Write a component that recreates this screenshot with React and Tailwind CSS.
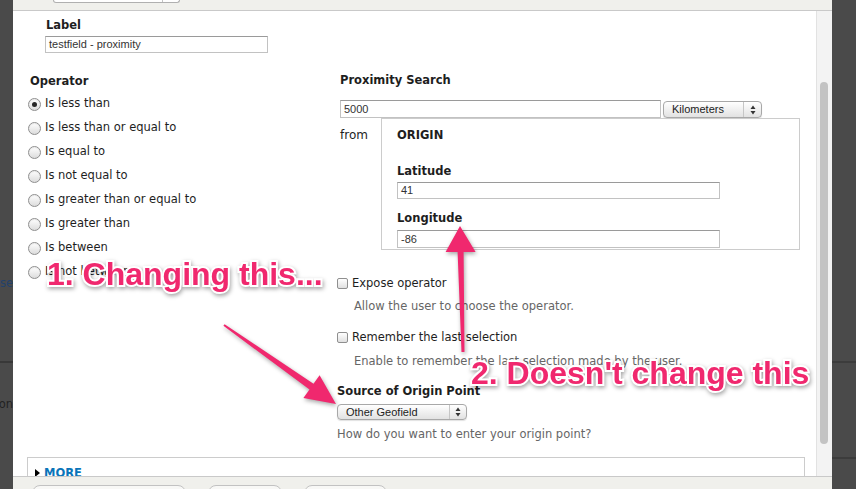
import React from "react";

function Radio({ checked }) {
  return (
    <div className="w-[13px] h-[13px] shrink-0 rounded-full border border-[#8f8f8f] bg-gradient-to-b from-[#ffffff] to-[#dcdcdc] shadow-[inset_0_1px_1px_rgba(0,0,0,0.08)] flex items-center justify-center">
      {checked ? <div className="w-[5px] h-[5px] rounded-full bg-[#262626]" /> : null}
    </div>
  );
}

function Checkbox() {
  return (
    <div className="w-[11px] h-[11px] shrink-0 rounded-[2px] border border-[#8f8f8f] bg-gradient-to-b from-[#ffffff] to-[#e0e0e0]" />
  );
}

function Arrows() {
  return (
    <svg width="6" height="10" viewBox="0 0 6 10">
      <polygon points="0.5,4 3,0.5 5.5,4" fill="#333" />
      <polygon points="0.5,6 3,9.5 5.5,6" fill="#333" />
    </svg>
  );
}

const inputCls =
  "border border-[#c2c2c2] border-t-[#9a9a9a] bg-white flex items-center pl-[3px] font-['Liberation_Sans',Arial,sans-serif] text-[11px] text-[#333] leading-none";

const selectCls =
  "rounded-[4px] border border-[#a8a8a8] bg-gradient-to-b from-[#ffffff] to-[#e2e2e2] shadow-[0_1px_1px_rgba(0,0,0,0.12)] flex items-center font-['Liberation_Sans',Arial,sans-serif] text-[11px] text-[#222] leading-none";

export default function App() {
  const radios = [
    "Is less than",
    "Is less than or equal to",
    "Is equal to",
    "Is not equal to",
    "Is greater than or equal to",
    "Is greater than",
    "Is between",
    "Is not between",
  ];
  return (
    <div className="relative w-[856px] h-[489px] overflow-hidden bg-[#4a4a4a] flex font-['DejaVu_Sans',sans-serif] text-[11.5px] text-[#1e1e1e]">
      {/* left background strip */}
      <div className="w-[13px] shrink-0 flex flex-col overflow-hidden">
        <div className="h-[276px] shrink-0" />
        <div className="flex justify-end leading-[14px] whitespace-nowrap text-[#23416a]">Choose</div>
        <div className="h-[71px] shrink-0" />
        <div className="h-[2px] shrink-0 bg-[#383838]" />
        <div className="h-[34px] shrink-0" />
        <div className="flex justify-end leading-[14px] whitespace-nowrap text-[#222]">Direction</div>
      </div>

      {/* middle: dialog */}
      <div className="w-[819px] shrink-0 flex flex-col">
        <div className="h-[11px] shrink-0 bg-[#f0f0ec] border-b border-[#c9c9c9] flex items-start">
          <div className="ml-[40px] w-[127px] h-[3px] bg-white border border-t-0 border-[#b0b0b0] rounded-b-[3px] flex justify-end">
            <div className="w-[17px] h-full border-l border-[#c4c4c4]" />
          </div>
        </div>

        <div className="h-[465px] shrink-0 flex">
          <div className="w-[803px] shrink-0 bg-white overflow-hidden flex flex-col">
            {/* Label */}
            <div className="pl-[32px] pt-[7px]">
              <div className="font-bold leading-[14px] pl-[1px]">Label</div>
              <div className={`${inputCls} mt-[4px] w-[223px] h-[17px]`}>testfield - proximity</div>
            </div>

            {/* columns */}
            <div className="mt-[20px] flex">
              <div className="ml-[15px] w-[309px] shrink-0">
                <div className="font-bold leading-[14px] pl-[2px] pt-[1px]">Operator</div>
                <div className="mt-[4px]">
                  {radios.map((r, i) => (
                    <div key={r} className="h-[24px] flex items-center gap-[4px] whitespace-nowrap">
                      <Radio checked={i === 0} />
                      <span>{r}</span>
                    </div>
                  ))}
                </div>
              </div>

              <div className="w-[470px] shrink-0 flex flex-col">
                <div className="pl-[3px] font-bold leading-[14px]">Proximity Search</div>
                <div className="mt-[13px] pl-[3px] flex gap-[2px] items-start">
                  <div className={`${inputCls} w-[321px] h-[18px] pl-[2px]`}>5000</div>
                  <div className={`${selectCls} mt-[1px] w-[99px] h-[17px]`}>
                    <span className="flex-1 pl-[8px]">Kilometers</span>
                    <div className="w-[18px] h-full border-l border-[#c6c6c6] flex items-center justify-center">
                      <Arrows />
                    </div>
                  </div>
                </div>
                <div className="flex pl-[3px]">
                  <div className="w-[41px] shrink-0 pt-[10px] text-[12px] leading-[14px]">from</div>
                  <div className="w-[419px] h-[132px] shrink-0 border border-[#cccccc] overflow-hidden pl-[15px] pt-[9px]">
                    <div className="font-bold leading-[14px]">ORIGIN</div>
                    <div className="mt-[22px] font-bold leading-[14px]">Latitude</div>
                    <div className={`${inputCls} mt-[4px] w-[323px] h-[17px]`}>41</div>
                    <div className="mt-[12px] font-bold leading-[14px]">Longitude</div>
                    <div className={`${inputCls} mt-[5px] w-[323px] h-[18px]`}>-86</div>
                  </div>
                </div>

                <div className="mt-[26px] flex items-center gap-[4px] leading-[14px]">
                  <Checkbox />
                  <span>Expose operator</span>
                </div>
                <div className="mt-[9px] pl-[17px] leading-[14px] text-[#666]">Allow the user to choose the operator.</div>
                <div className="mt-[17px] flex items-center gap-[4px] leading-[14px]">
                  <Checkbox />
                  <span>Remember the last selection</span>
                </div>
                <div className="mt-[10px] pl-[17px] leading-[14px] text-[#666]">Enable to remember the last selection made by the user.</div>
                <div className="mt-[16px] font-bold leading-[14px]">Source of Origin Point</div>
                <div className={`${selectCls} mt-[6px] w-[130px] h-[16px]`}>
                  <span className="flex-1 pl-[8px]">Other Geofield</span>
                  <div className="w-[17px] h-full border-l border-[#c6c6c6] flex items-center justify-center">
                    <Arrows />
                  </div>
                </div>
                <div className="mt-[7px] leading-[14px] text-[#666]">How do you want to enter your origin point?</div>
              </div>
            </div>

            {/* MORE */}
            <div className="mt-[16px] ml-[14px] w-[778px] h-[40px] shrink-0 border border-[#cccccc] pt-[8px] pl-[7px] flex items-center gap-[4px] self-start">
              <div className="w-0 h-0 border-y-[4px] border-y-transparent border-l-[5px] border-l-black self-start mt-[3px]" />
              <span className="font-bold text-[#0a74b9] leading-[14px] self-start">MORE</span>
            </div>
          </div>

          {/* scrollbar */}
          <div className="w-[16px] shrink-0 bg-[#f3f3f3] border-l border-[#e2e2e2] pl-[3px]">
            <div className="mt-[71px] w-[8px] h-[362px] rounded-full bg-[#c3c3c3]" />
          </div>
        </div>

        <div className="h-[13px] shrink-0 bg-[#f0f0ec] border-t border-[#c9c9c9] pt-[8px] flex items-start">
          <div className="ml-[19px] w-[154px] h-[12px] rounded-t-[8px] border border-[#c2c2c2] bg-[#f8f8f6]" />
          <div className="ml-[22px] w-[74px] h-[12px] rounded-t-[8px] border border-[#c2c2c2] bg-[#f8f8f6]" />
          <div className="ml-[22px] w-[83px] h-[12px] rounded-t-[8px] border border-[#c2c2c2] bg-[#f8f8f6]" />
        </div>
      </div>

      {/* right background strip */}
      <div className="w-[24px] shrink-0 flex flex-col">
        <div className="h-[361px] shrink-0" />
        <div className="h-[2px] shrink-0 bg-[#3c3c3c]" />
        <div className="h-[94px] shrink-0" />
        <div className="h-[2px] shrink-0 bg-[#3c3c3c]" />
      </div>

      {/* annotation arrows */}
      <svg
        className="absolute left-0 top-0 pointer-events-none drop-shadow-[1px_2px_2px_rgba(0,0,0,0.35)]"
        width="856"
        height="489"
        viewBox="0 0 856 489"
      >
        <polygon
          points="224.6,324.2 313.5,383.8 319.6,375.3 336,404 303.4,398.1 309.5,389.6 223.4,325.8"
          fill="#f0286e"
        />
        <polygon
          points="461.5,352 457.6,252 445.6,252 460,226 475.6,252 463.6,252 464.5,352"
          fill="#f0286e"
        />
      </svg>

      {/* annotation texts */}
      <div className="absolute left-[47px] top-[258px] whitespace-nowrap font-['Liberation_Sans',Arial,sans-serif] font-bold text-[32px] leading-none text-[#f0286e] [-webkit-text-stroke:4px_white] [paint-order:stroke_fill] drop-shadow-[1px_2px_2px_rgba(0,0,0,0.35)]">
        1. Changing this...
      </div>
      <div className="absolute left-[471px] top-[357px] whitespace-nowrap font-['Liberation_Sans',Arial,sans-serif] font-bold text-[32px] leading-none text-[#f0286e] [-webkit-text-stroke:4px_white] [paint-order:stroke_fill] drop-shadow-[1px_2px_2px_rgba(0,0,0,0.35)]">
        2. Doesn't change this
      </div>
    </div>
  );
}
